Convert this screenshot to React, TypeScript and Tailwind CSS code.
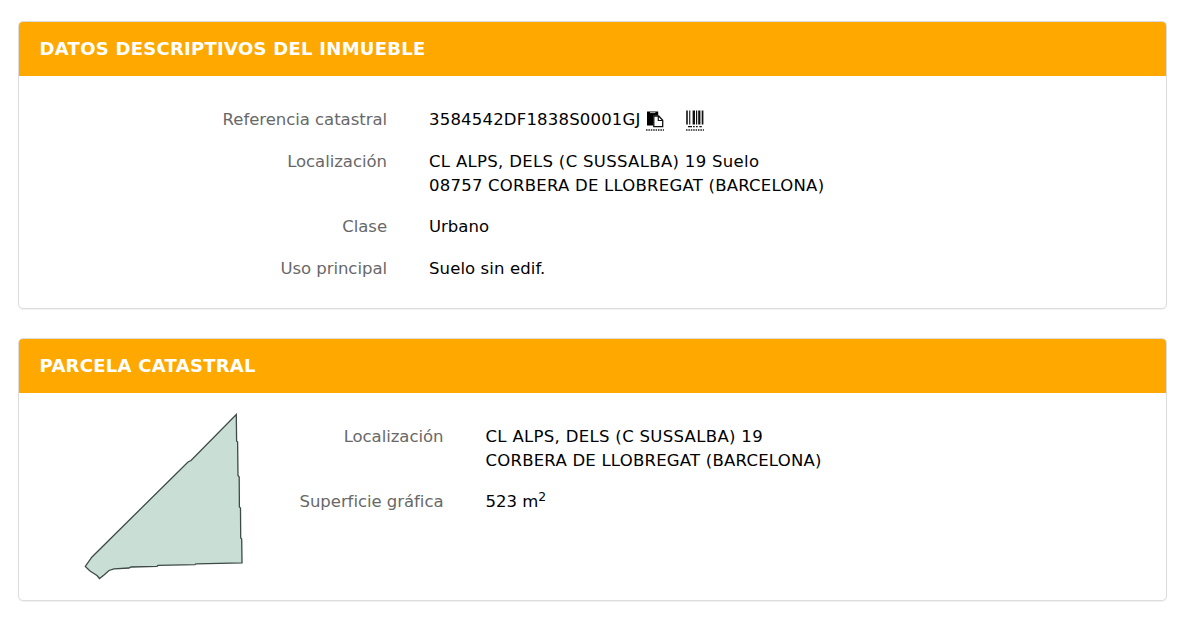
import type { ReactNode } from 'react';

const PasteIcon = () => (
  <svg width="18" height="21" viewBox="0 0 18 21">
    <path d="M1 2.2V1.6h11.2v4H7.4v9.8H1z" fill="#000" />
    <path d="M4 2.6h5.4" stroke="#ccc" strokeWidth="0.9" />
    <path d="M7.8 6h4.9l4 4.2v6.4H7.8z" fill="#fff" stroke="#111" strokeWidth="1.3" />
    <path d="M12.3 6v4.5h4.4" fill="none" stroke="#111" strokeWidth="1.2" />
    <path d="M0 20h18" stroke="#222" strokeWidth="1.3" strokeDasharray="1.5 0.9" />
  </svg>
);

const BarcodeIcon = () => (
  <svg width="18" height="21" viewBox="0 0 18 21">
    <path
      d="M0.2 0.6h1.6v14H0.2zM3.2 0.6h1.1v14H3.2zM6.6 0.6h2.4v14H6.6zM10 0.6h1.2v14H10zM12.2 0.6h2.2v14h-2.2zM15.7 0.6h1.7v14h-1.7z"
      fill="#111"
    />
    <path d="M2 16.7h4M7 16.7h1.7M10 16.7h1.7M13.4 16.7h2.4" stroke="#111" strokeWidth="1.3" />
    <path d="M0 20h18" stroke="#222" strokeWidth="1.3" strokeDasharray="1.5 0.9" />
  </svg>
);

const ParcelShape = () => (
  <svg width="160" height="168" viewBox="84 413 160 168" className="block">
    <path
      d="M236.3 414.5L236.6 441L237.6 442L238 475.5L239.2 477L239.4 507L240.5 508L240.7 538L241.7 539L242 562.8L196 563.8L195 564.6L158 565.4L157 566.3L131 567L129 568L114 568.8L109 570.5L104 575L99.5 578.5L97 575.5L90 571L85.3 566.5L92 557L188 462L191 460.5Z"
      fill="#c9dfd5"
      stroke="#3d4a46"
      strokeWidth="1.3"
    />
  </svg>
);

const Card = ({ title, className, children }: { title: string; className: string; children: ReactNode }) => (
  <section className={`overflow-hidden rounded-[5px] border border-[#dcdcdc] shadow-[0_1px_1px_rgba(0,0,0,0.06)] ${className}`}>
    <h2 className="flex h-[54px] items-center bg-[#ffa800] pl-[20.6px] text-[18px] font-bold tracking-[0.27px] text-white">
      <span>{title}</span>
    </h2>
    {children}
  </section>
);

const Row = ({ label, labelWidth, children }: { label: string; labelWidth: string; children: ReactNode }) => (
  <div className="flex">
    <dt className={`shrink-0 text-right tracking-[-0.04px] text-[#686868] ${labelWidth}`}>{label}</dt>
    <dd className="ml-[42px] text-black">{children}</dd>
  </div>
);

const App = () => {
  return (
    <main className="h-[620px] bg-white pt-[21px] pl-[18px] font-['DejaVu_Sans',Verdana,sans-serif] text-[16.5px] leading-[23.7px]">
      <Card title="DATOS DESCRIPTIVOS DEL INMUEBLE" className="h-[288px] w-[1149px]">
        <dl className="flex flex-col gap-[17.8px] pt-[32.4px]">
          <Row label="Referencia catastral" labelWidth="w-[368px]">
            <div className="flex h-[23.7px]">
              <span className="w-[217px] tracking-[0.19px]">3584542DF1838S0001GJ</span>
              <span className="mt-[1.6px] w-[40px]"><PasteIcon /></span>
              <span className="mt-[1.6px]"><BarcodeIcon /></span>
            </div>
          </Row>
          <Row label="Localización" labelWidth="w-[368px]">
            <p className="tracking-[0.32px]">CL ALPS, DELS (C SUSSALBA) 19 Suelo</p>
            <p className="tracking-[0.23px]">08757 CORBERA DE LLOBREGAT (BARCELONA)</p>
          </Row>
          <Row label="Clase" labelWidth="w-[368px]">Urbano</Row>
          <Row label="Uso principal" labelWidth="w-[368px]">
            <span className="tracking-[0.1px]">Suelo sin edif.</span>
          </Row>
        </dl>
      </Card>

      <Card title="PARCELA CATASTRAL" className="mt-[29px] h-[263px] w-[1149px]">
        <div className="flex">
          <div className="w-[225px] pt-[20px] pl-[65px]">
            <ParcelShape />
          </div>
          <dl className="flex flex-col gap-[17.6px] pt-[32.4px]">
            <Row label="Localización" labelWidth="w-[199.5px]">
              <p className="tracking-[0.32px]">CL ALPS, DELS (C SUSSALBA) 19</p>
              <p className="tracking-[0.23px]">CORBERA DE LLOBREGAT (BARCELONA)</p>
            </Row>
            <Row label="Superficie gráfica" labelWidth="w-[199.5px]">
              523 m<sup className="text-[12.4px]">2</sup>
            </Row>
          </dl>
        </div>
      </Card>
    </main>
  );
};

export default App;
